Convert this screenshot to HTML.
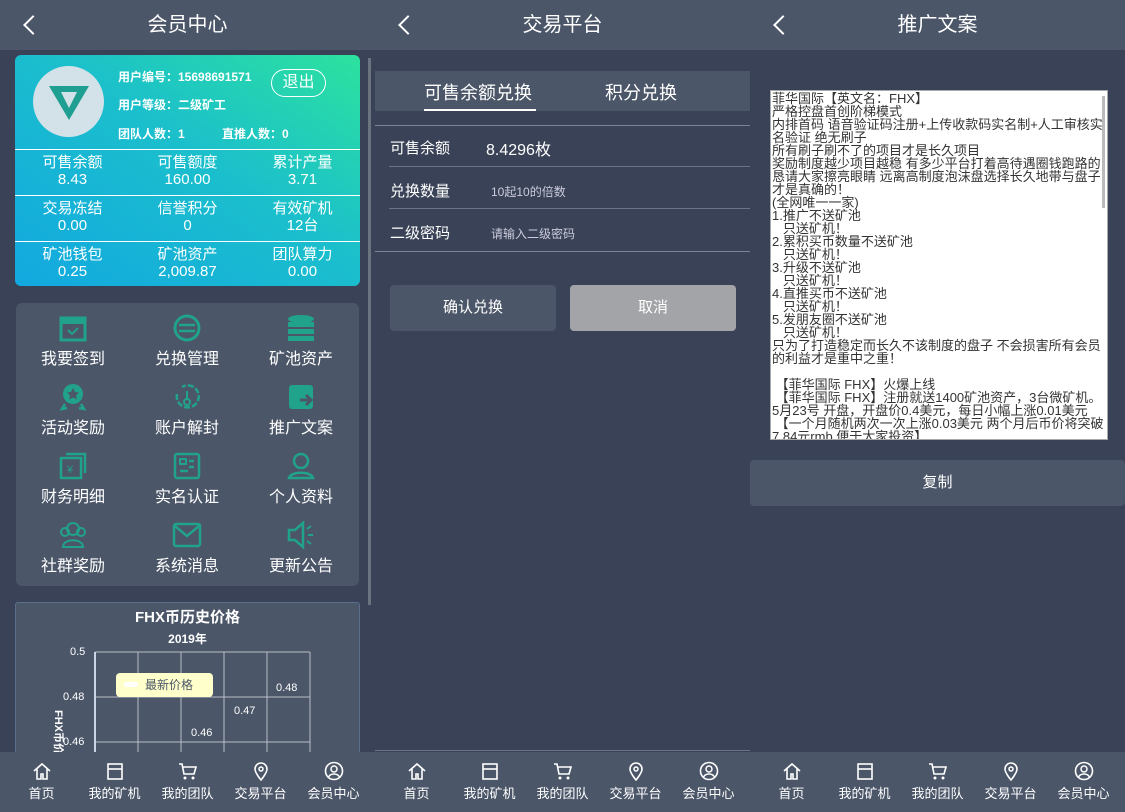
<!DOCTYPE html>
<html><head><meta charset="utf-8"><style>
*{margin:0;padding:0;box-sizing:border-box}
body{width:1125px;height:812px;background:#394256;font-family:"Liberation Sans","Noto Sans CJK SC",sans-serif;color:#fff;position:relative;overflow:hidden}
.a{position:absolute}
.hd{position:absolute;top:0;height:50px;width:375px;background:#4b5668;text-align:center;line-height:50px;font-size:20px}
.hd .bk{position:absolute;width:14px;height:14px;border-left:2px solid #fff;border-bottom:2px solid #fff;transform:rotate(45deg);top:18px;left:26px}
.nav{position:absolute;top:752px;height:60px;width:375px;background:#4b5668;display:flex;padding-left:5px}
.nav div{width:73px;text-align:center;font-size:13px;padding-top:9px}
.nav svg{display:block;margin:0 auto 2px;width:20px;height:20px}
.stat{position:absolute;width:115px;text-align:center;font-size:15px;line-height:17px}
.hl{position:absolute;left:15px;width:345px;height:1px;background:#fff}
.mi{position:absolute;width:114px;text-align:center;font-size:16px}
.mi svg{display:block;margin:0 auto 2px;width:30px;height:30px}
.row{position:absolute;left:390px;font-size:15px}
.ln{position:absolute;height:1px;background:#6b7384}
pre{font-family:"Liberation Sans","Noto Sans CJK SC",sans-serif;font-size:13px;line-height:13px;color:#333;white-space:pre-wrap}
</style></head><body>
<!-- LEFT -->
<div class="hd" style="left:0"><span class="bk"></span>会员中心</div>
<div class="a" style="left:15px;top:55px;width:345px;height:231px;border-radius:6px;background:linear-gradient(to top right,#12a8e0 0%,#1bbfcc 55%,#2ce29e 100%)"></div>
<div class="a" style="left:33px;top:66px;width:71px;height:71px;border-radius:50%;background:#d3e1e8"></div>
<svg class="a" style="left:47px;top:82px" width="44" height="40" viewBox="0 0 44 40"><path d="M2 4 L42 4 L22 38 Z" fill="#1f9e92"/><path d="M14 10 L30 10 L22 26 Z" fill="#d3e1e8"/></svg>
<div class="a" style="left:118px;top:68px;font-size:12px;font-weight:bold">用户编号：15698691571</div>
<div class="a" style="left:271px;top:69px;width:55px;height:28px;border:1px solid #fff;border-radius:14px;text-align:center;line-height:26px;font-size:16px">退出</div>
<div class="a" style="left:118px;top:96px;font-size:12px;font-weight:bold">用户等级：二级矿工</div>
<div class="a" style="left:118px;top:125px;font-size:12px;font-weight:bold">团队人数：1</div>
<div class="a" style="left:222px;top:125px;font-size:12px;font-weight:bold">直推人数：0</div>
<div class="hl" style="top:149px"></div><div class="hl" style="top:195px"></div><div class="hl" style="top:241px"></div>
<div class="stat" style="left:15px;top:154px">可售余额<br>8.43</div>
<div class="stat" style="left:130px;top:154px">可售额度<br>160.00</div>
<div class="stat" style="left:245px;top:154px">累计产量<br>3.71</div>
<div class="stat" style="left:15px;top:200px">交易冻结<br>0.00</div>
<div class="stat" style="left:130px;top:200px">信誉积分<br>0</div>
<div class="stat" style="left:245px;top:200px">有效矿机<br>12台</div>
<div class="stat" style="left:15px;top:246px">矿池钱包<br>0.25</div>
<div class="stat" style="left:130px;top:246px">矿池资产<br>2,009.87</div>
<div class="stat" style="left:245px;top:246px">团队算力<br>0.00</div>
<div class="a" style="left:368px;top:58px;width:3px;height:547px;background:#6b7280"></div>
<div class="a" style="left:16px;top:303px;width:343px;height:283px;border-radius:6px;background:#4b5668"></div>
<div class="mi" style="left:16px;top:313px"><svg viewBox="0 0 30 30"><rect x="3" y="5" width="24" height="22" fill="none" stroke="#21a28a" stroke-width="3"/><rect x="3" y="5" width="24" height="6" fill="#21a28a"/><path d="M10 17l4 4 6-6" stroke="#21a28a" stroke-width="2" fill="none"/></svg>我要签到</div>
<div class="mi" style="left:130px;top:313px"><svg viewBox="0 0 30 30"><circle cx="15" cy="15" r="12" fill="none" stroke="#21a28a" stroke-width="3"/><path d="M7 12h16M7 18h16" stroke="#21a28a" stroke-width="2.5"/></svg>兑换管理</div>
<div class="mi" style="left:244px;top:313px"><svg viewBox="0 0 30 30"><ellipse cx="15" cy="6" rx="13" ry="4" fill="#21a28a"/><rect x="2" y="9" width="26" height="5" fill="#21a28a"/><rect x="2" y="16" width="26" height="5" fill="#21a28a"/><rect x="2" y="23" width="26" height="5" fill="#21a28a"/></svg>矿池资产</div>
<div class="mi" style="left:16px;top:382px"><svg viewBox="0 0 30 30"><circle cx="15" cy="12" r="10" fill="#21a28a"/><path d="M15 6l2 4 4 .5-3 3 1 4-4-2-4 2 1-4-3-3 4-.5z" fill="#4b5668"/><path d="M7 22l-3 5 5-1M23 22l3 5-5-1" stroke="#21a28a" stroke-width="2.5" fill="none"/></svg>活动奖励</div>
<div class="mi" style="left:130px;top:382px"><svg viewBox="0 0 30 30"><path d="M5 12a11 11 0 1 0 5-7" fill="none" stroke="#21a28a" stroke-width="2.5" stroke-dasharray="6 2"/><circle cx="15" cy="20" r="3" fill="none" stroke="#21a28a" stroke-width="2"/><path d="M15 17V9" stroke="#21a28a" stroke-width="2"/></svg>账户解封</div>
<div class="mi" style="left:244px;top:382px"><svg viewBox="0 0 30 30"><rect x="3" y="3" width="24" height="24" rx="3" fill="#21a28a"/><path d="M14 18h10M20 13l5 5-5 5" stroke="#4b5668" stroke-width="3" fill="none"/></svg>推广文案</div>
<div class="mi" style="left:16px;top:451px"><svg viewBox="0 0 30 30"><rect x="3" y="7" width="20" height="20" fill="none" stroke="#21a28a" stroke-width="2.5"/><path d="M8 3h19v19" stroke="#21a28a" stroke-width="2.5" fill="none"/><text x="9" y="22" font-size="11" fill="#21a28a">¥</text></svg>财务明细</div>
<div class="mi" style="left:130px;top:451px"><svg viewBox="0 0 30 30"><rect x="3" y="3" width="24" height="24" rx="2" fill="none" stroke="#21a28a" stroke-width="2.5"/><rect x="8" y="8" width="6" height="5" fill="none" stroke="#21a28a" stroke-width="2"/><path d="M17 10h5M17 16h5M8 20h8" stroke="#21a28a" stroke-width="2.5"/></svg>实名认证</div>
<div class="mi" style="left:244px;top:451px"><svg viewBox="0 0 30 30"><circle cx="15" cy="10" r="7" fill="none" stroke="#21a28a" stroke-width="2.5"/><path d="M3 27c2-7 22-7 24 0z" fill="none" stroke="#21a28a" stroke-width="2.5"/></svg>个人资料</div>
<div class="mi" style="left:16px;top:520px"><svg viewBox="0 0 30 30"><circle cx="15" cy="9" r="6" fill="none" stroke="#21a28a" stroke-width="2"/><path d="M5 27c0-9 20-9 20 0z" fill="none" stroke="#21a28a" stroke-width="2"/><circle cx="7" cy="12" r="4" fill="none" stroke="#21a28a" stroke-width="2"/><circle cx="23" cy="12" r="4" fill="none" stroke="#21a28a" stroke-width="2"/></svg>社群奖励</div>
<div class="mi" style="left:130px;top:520px"><svg viewBox="0 0 30 30"><rect x="2" y="4" width="26" height="22" rx="2" fill="none" stroke="#21a28a" stroke-width="2.5"/><path d="M3 6l12 10 12-10" stroke="#21a28a" stroke-width="2.5" fill="none"/></svg>系统消息</div>
<div class="mi" style="left:244px;top:520px"><svg viewBox="0 0 30 30"><path d="M3 10h6l8-7v24l-8-7H3z" fill="none" stroke="#21a28a" stroke-width="2.5"/><path d="M21 9l4-3M22 15h5M21 21l4 3" stroke="#21a28a" stroke-width="2"/></svg>更新公告</div>
<div class="a" style="left:15px;top:602px;width:345px;height:160px;background:#4b5668;border:1px solid #5a6e8e;border-radius:3px"></div>
<div class="a" style="left:15px;top:606px;width:345px;text-align:center;font-size:15px;font-weight:bold">FHX币历史价格</div>
<div class="a" style="left:15px;top:630px;width:345px;text-align:center;font-size:12px;font-weight:bold">2019年</div>
<svg class="a" style="left:0;top:640px" width="375" height="112">
<g stroke="#b9bec8" stroke-width="1" fill="none">
<path d="M95 12H310M95 57H310M95 102H310M138 12V112M181 12V112M224 12V112M267 12V112M310 12V112"/></g>
<path d="M95 12V112" stroke="#c9d6e6" stroke-width="2"/>
<g fill="#fff" font-size="11" font-family="Liberation Sans"><text x="70" y="15">0.5</text><text x="63" y="60">0.48</text><text x="63" y="105">0.46</text>
<text x="276" y="51">0.48</text><text x="234" y="74">0.47</text><text x="191" y="96">0.46</text></g>
<text transform="translate(55,70) rotate(90)" fill="#fff" font-size="11" font-weight="bold">FHX币价格</text>
</svg>
<div class="a" style="left:116px;top:673px;width:97px;height:24px;background:#ffffcc;border-radius:4px;color:#4b5668;font-size:12px;line-height:24px;padding-left:29px">最新价格<span class="a" style="left:8px;top:9px;width:14px;height:5px;background:#fff;border-radius:3px"></span></div>
<div class="nav" style="left:0">
<div><svg viewBox="0 0 20 20"><path d="M2 10L10 3l8 7M5 8v10h4v-5h2v5h4V8" fill="none" stroke="#fff" stroke-width="1.6"/></svg>首页</div>
<div><svg viewBox="0 0 20 20"><rect x="3" y="3" width="14" height="15" fill="none" stroke="#fff" stroke-width="1.6"/><path d="M3 8h14" stroke="#fff" stroke-width="1.6"/></svg>我的矿机</div>
<div><svg viewBox="0 0 20 20"><path d="M1 3h3l2 10h10l2-7H5" fill="none" stroke="#fff" stroke-width="1.6"/><circle cx="7" cy="17" r="1.5" fill="#fff"/><circle cx="15" cy="17" r="1.5" fill="#fff"/></svg>我的团队</div>
<div><svg viewBox="0 0 20 20"><path d="M10 19s-6-7-6-11a6 6 0 0 1 12 0c0 4-6 11-6 11z" fill="none" stroke="#fff" stroke-width="1.6"/><circle cx="10" cy="8" r="2" fill="none" stroke="#fff" stroke-width="1.5"/></svg>交易平台</div>
<div><svg viewBox="0 0 20 20"><circle cx="10" cy="10" r="8.5" fill="none" stroke="#fff" stroke-width="1.6"/><circle cx="10" cy="8" r="3" fill="none" stroke="#fff" stroke-width="1.5"/><path d="M4.5 16c2-4 9-4 11 0" fill="none" stroke="#fff" stroke-width="1.5"/></svg>会员中心</div>
</div>
<!-- MIDDLE -->
<div class="hd" style="left:375px"><span class="bk"></span>交易平台</div>
<div class="a" style="left:375px;top:71px;width:375px;height:40px;background:#4b5668"></div>
<div class="a" style="left:424px;top:79px;font-size:18px">可售余额兑换</div>
<div class="a" style="left:424px;top:109px;width:112px;height:2px;background:#fff"></div>
<div class="a" style="left:605px;top:79px;font-size:18px">积分兑换</div>
<div class="ln" style="left:375px;top:125px;width:375px;background:#7d8494"></div>
<div class="row" style="top:137px">可售余额</div><div class="a" style="left:486px;top:136px;font-size:16px">8.4296枚</div>
<div class="ln" style="left:389px;top:166px;width:361px"></div>
<div class="row" style="top:180px">兑换数量</div><div class="a" style="left:491px;top:183px;font-size:12px;color:#ccd">10起10的倍数</div>
<div class="ln" style="left:389px;top:208px;width:361px"></div>
<div class="row" style="top:222px">二级密码</div><div class="a" style="left:491px;top:225px;font-size:12px;color:#ccd">请输入二级密码</div>
<div class="ln" style="left:375px;top:251px;width:375px;background:#7d8494"></div>
<div class="a" style="left:390px;top:285px;width:166px;height:46px;background:#4b5668;border-radius:4px;text-align:center;line-height:46px;font-size:15px">确认兑换</div>
<div class="a" style="left:570px;top:285px;width:166px;height:46px;background:#a3a4a8;border-radius:4px;text-align:center;line-height:46px;font-size:15px">取消</div>
<div class="ln" style="left:375px;top:750px;width:375px"></div>
<div class="nav" style="left:375px">
<div><svg viewBox="0 0 20 20"><path d="M2 10L10 3l8 7M5 8v10h4v-5h2v5h4V8" fill="none" stroke="#fff" stroke-width="1.6"/></svg>首页</div>
<div><svg viewBox="0 0 20 20"><rect x="3" y="3" width="14" height="15" fill="none" stroke="#fff" stroke-width="1.6"/><path d="M3 8h14" stroke="#fff" stroke-width="1.6"/></svg>我的矿机</div>
<div><svg viewBox="0 0 20 20"><path d="M1 3h3l2 10h10l2-7H5" fill="none" stroke="#fff" stroke-width="1.6"/><circle cx="7" cy="17" r="1.5" fill="#fff"/><circle cx="15" cy="17" r="1.5" fill="#fff"/></svg>我的团队</div>
<div><svg viewBox="0 0 20 20"><path d="M10 19s-6-7-6-11a6 6 0 0 1 12 0c0 4-6 11-6 11z" fill="none" stroke="#fff" stroke-width="1.6"/><circle cx="10" cy="8" r="2" fill="none" stroke="#fff" stroke-width="1.5"/></svg>交易平台</div>
<div><svg viewBox="0 0 20 20"><circle cx="10" cy="10" r="8.5" fill="none" stroke="#fff" stroke-width="1.6"/><circle cx="10" cy="8" r="3" fill="none" stroke="#fff" stroke-width="1.5"/><path d="M4.5 16c2-4 9-4 11 0" fill="none" stroke="#fff" stroke-width="1.5"/></svg>会员中心</div>
</div>
<!-- RIGHT -->
<div class="hd" style="left:750px"><span class="bk"></span>推广文案</div>
<div class="a" style="left:770px;top:90px;width:338px;height:350px;background:#fff;border:1px solid #aaa;overflow:hidden;padding:1px 3px 0 1px">
<pre>菲华国际【英文名：FHX】
严格控盘首创阶梯模式
内排首码 语音验证码注册+上传收款码实名制+人工审核实名验证 绝无刷子
所有刷子刷不了的项目才是长久项目
奖励制度越少项目越稳 有多少平台打着高待遇圈钱跑路的恳请大家擦亮眼睛 远离高制度泡沫盘选择长久地带与盘子才是真确的！
(全网唯一一家)
1.推广不送矿池
   只送矿机！
2.累积买币数量不送矿池
   只送矿机！
3.升级不送矿池
   只送矿机！
4.直推买币不送矿池
   只送矿机！
5.发朋友圈不送矿池
   只送矿机！
只为了打造稳定而长久不该制度的盘子 不会损害所有会员的利益才是重中之重！

 【菲华国际 FHX】火爆上线
 【菲华国际 FHX】注册就送1400矿池资产，3台微矿机。
5月23号 开盘，开盘价0.4美元，每日小幅上涨0.01美元
 【一个月随机两次一次上涨0.03美元 两个月后币价将突破7.84元rmb 便于大家投资】</pre>
<div class="a" style="right:2px;top:5px;width:3px;height:112px;background:#bbb"></div>
</div>
<div class="a" style="left:750px;top:460px;width:375px;height:46px;background:#4b5668;border-radius:4px;text-align:center;line-height:46px;font-size:15px">复制</div>
<div class="nav" style="left:750px">
<div><svg viewBox="0 0 20 20"><path d="M2 10L10 3l8 7M5 8v10h4v-5h2v5h4V8" fill="none" stroke="#fff" stroke-width="1.6"/></svg>首页</div>
<div><svg viewBox="0 0 20 20"><rect x="3" y="3" width="14" height="15" fill="none" stroke="#fff" stroke-width="1.6"/><path d="M3 8h14" stroke="#fff" stroke-width="1.6"/></svg>我的矿机</div>
<div><svg viewBox="0 0 20 20"><path d="M1 3h3l2 10h10l2-7H5" fill="none" stroke="#fff" stroke-width="1.6"/><circle cx="7" cy="17" r="1.5" fill="#fff"/><circle cx="15" cy="17" r="1.5" fill="#fff"/></svg>我的团队</div>
<div><svg viewBox="0 0 20 20"><path d="M10 19s-6-7-6-11a6 6 0 0 1 12 0c0 4-6 11-6 11z" fill="none" stroke="#fff" stroke-width="1.6"/><circle cx="10" cy="8" r="2" fill="none" stroke="#fff" stroke-width="1.5"/></svg>交易平台</div>
<div><svg viewBox="0 0 20 20"><circle cx="10" cy="10" r="8.5" fill="none" stroke="#fff" stroke-width="1.6"/><circle cx="10" cy="8" r="3" fill="none" stroke="#fff" stroke-width="1.5"/><path d="M4.5 16c2-4 9-4 11 0" fill="none" stroke="#fff" stroke-width="1.5"/></svg>会员中心</div>
</div>
</body></html>
